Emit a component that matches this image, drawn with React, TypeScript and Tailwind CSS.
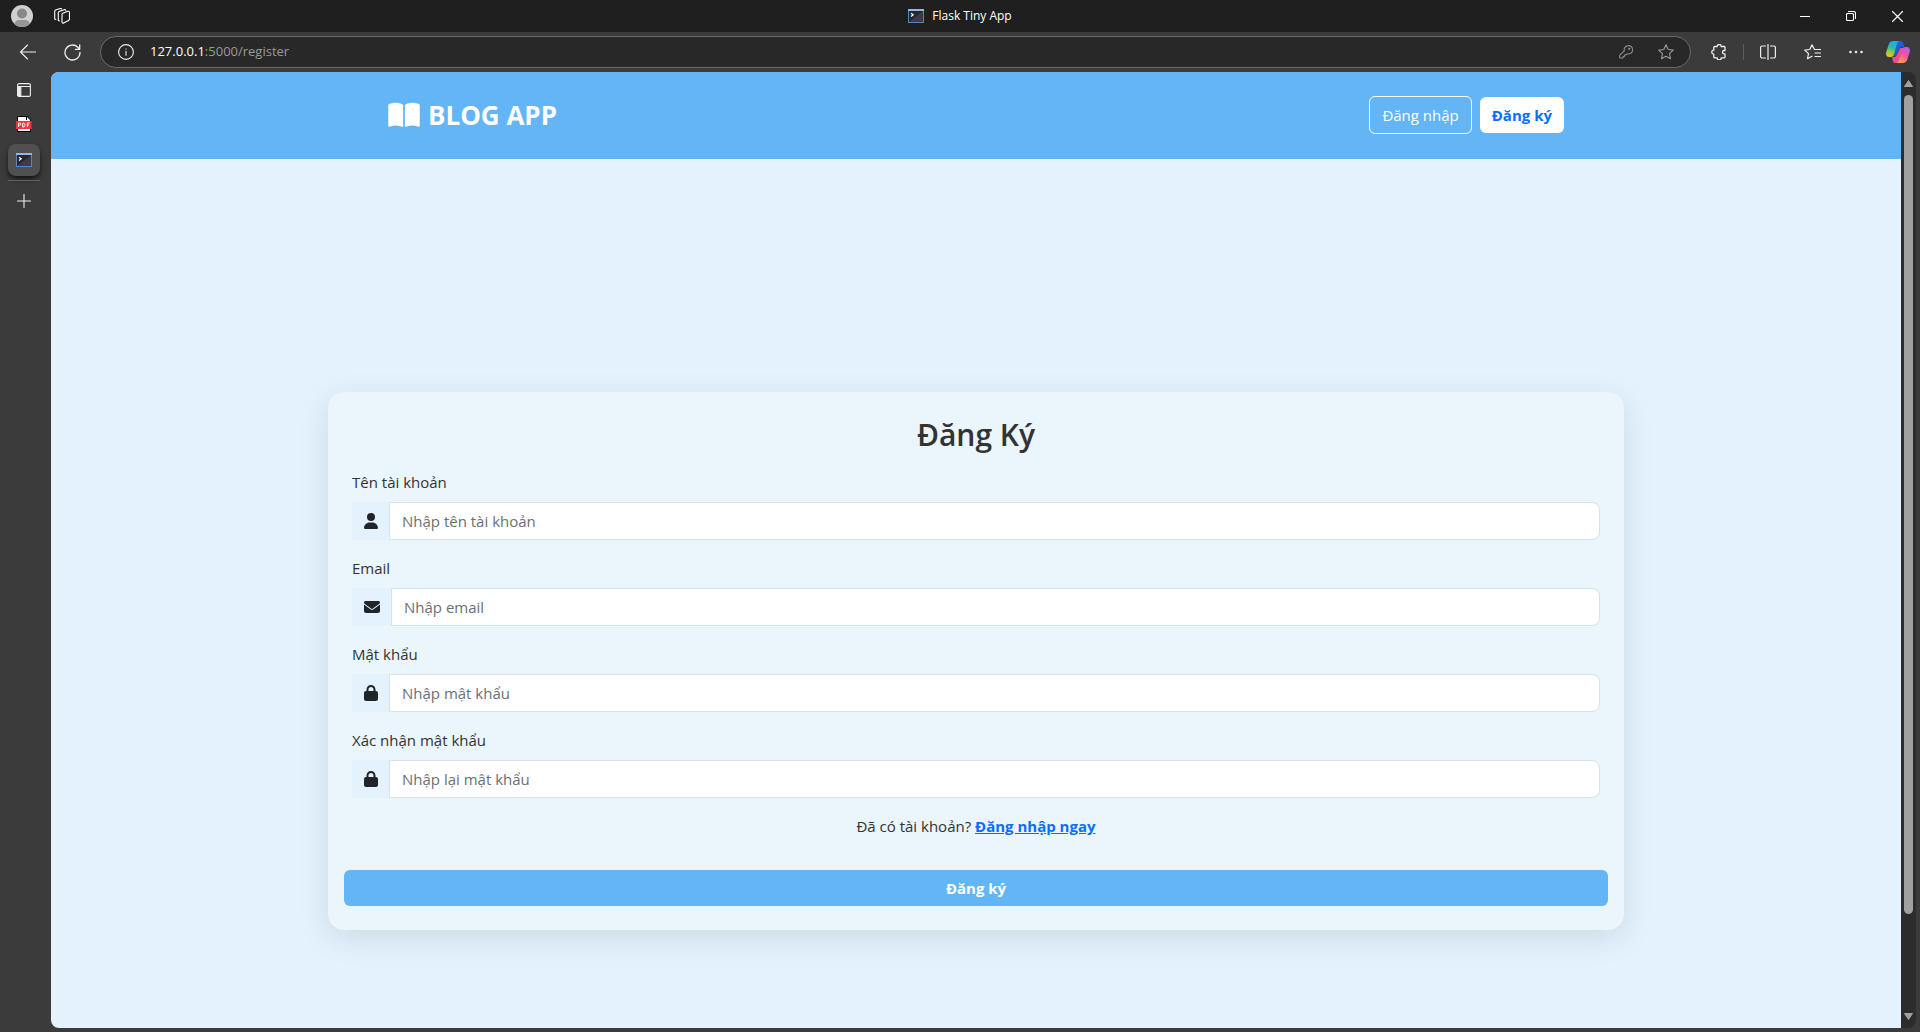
import type { ReactNode } from "react";
import { FaBookOpen, FaEnvelope, FaLock, FaUser } from "react-icons/fa6";

const line = {
  fill: "none",
  stroke: "currentColor",
  strokeWidth: 1.1,
  strokeLinecap: "round" as const,
  strokeLinejoin: "round" as const,
};

function TerminalIcon() {
  return (
    <svg width="16" height="16" viewBox="0 0 16 16" aria-hidden="true">
      <rect x="0" y="1" width="16" height="14" fill="#5b83c4" />
      <rect x="0" y="1" width="16" height="2" fill="#8fb9ee" />
      <rect x="11" y="1" width="3" height="1" fill="#d9a0b4" />
      <rect x="1" y="3" width="14" height="11" fill="#26282d" />
      <path d="M1 14L15 3v11z" fill="#3a3d42" />
      <path d="M3 5.2l2.2 1.6L3 8.4" fill="none" stroke="#fff" strokeWidth="1.2" />
    </svg>
  );
}

function PdfIcon() {
  return (
    <svg width="16" height="16" viewBox="0 0 16 16" aria-hidden="true">
      <path d="M1 0h10l4 4v12H1z" fill="#000" />
      <path d="M2 1h8v3h4v11H2z" fill="#fff" />
      <path d="M11 1l3 3h-3z" fill="#fff" />
      <rect x="0" y="5" width="15.5" height="8" rx="0.6" fill="#f5333f" />
      <path
        d="M2.5 11V7h1.2a1 1 0 0 1 0 2.2H2.5M6.7 7v4h.8c2 0 2-4 0-4zM11.3 11V7h2.2M11.3 9h1.8"
        fill="none"
        stroke="#fff"
        strokeWidth="1"
      />
    </svg>
  );
}

function CopilotIcon() {
  return (
    <svg width="24" height="22" viewBox="0 0 24 22" aria-hidden="true">
      <defs>
        <linearGradient id="cpA" x1="0.6" y1="0" x2="0.3" y2="1">
          <stop offset="0" stopColor="#1fa8f0" />
          <stop offset="0.4" stopColor="#2fb6b0" />
          <stop offset="0.7" stopColor="#8fce3c" />
          <stop offset="1" stopColor="#f2c513" />
        </linearGradient>
        <linearGradient id="cpB" x1="0.7" y1="0" x2="0.3" y2="1">
          <stop offset="0" stopColor="#b05cf5" />
          <stop offset="0.45" stopColor="#f0529c" />
          <stop offset="1" stopColor="#ffa04a" />
        </linearGradient>
        <linearGradient id="cpC" x1="0" y1="0" x2="1" y2="1">
          <stop offset="0" stopColor="#1d6fe8" />
          <stop offset="1" stopColor="#1b49c8" />
        </linearGradient>
      </defs>
      <path d="M8 0h6.5c1.6 0 2.4 1 2.9 2.6l1 3.4h-2.6c-1.7 0-2.5 1-3 2.500L10 15H7z" fill="url(#cpC)" />
      <path d="M16 22H9.500c-1.600 0-2.300-1-2.800-2.600L6 16h2c1.700 0 2.500-1 3-2.500L14 7h3z" fill="#e8508c" />
      <path
        d="M7.500 0h5.800c-1.500.3-2 1.600-2.500 3.200L8.400 12c-.7 2.600-1.500 4-3.600 4H3.200C.6 16-.4 13.800.3 11L2.500 4C3.300 1.400 4.700 0 7.500 0z"
        fill="url(#cpA)"
      />
      <path
        d="M16.500 22h-5.800c1.500-.3 2-1.600 2.500-3.200l2.400-8.800c.7-2.600 1.500-4 3.600-4h1.600c2.600 0 3.600 2.200 2.900 5l-2.200 7c-.8 2.600-2.200 4-5 4z"
        fill="url(#cpB)"
      />
    </svg>
  );
}

function ChromeButton({ label, children, className = "w-8" }: { label: string; children: ReactNode; className?: string }) {
  return (
    <button type="button" aria-label={label} className={`flex h-8 shrink-0 items-center justify-center ${className}`}>
      {children}
    </button>
  );
}

function TitleBar() {
  return (
    <div className="grid h-8 shrink-0 grid-cols-[1fr_auto_1fr] items-center bg-[#1f1f1f] text-white">
      <div className="flex items-center gap-2 pl-1.5">
        <ChromeButton label="Profile">
          <svg width="22" height="22" viewBox="0 0 22 22" aria-hidden="true">
            <clipPath id="avatar">
              <circle cx="11" cy="11" r="11" />
            </clipPath>
            <g clipPath="url(#avatar)">
              <rect width="22" height="22" fill="#d2d0ce" />
              <circle cx="11" cy="8.500" r="5" fill="#8a8886" />
              <path d="M3 22c0-5 2-7 5-7h6c3 0 5 2 5 7z" fill="#979593" />
            </g>
          </svg>
        </ChromeButton>
        <ChromeButton label="Workspaces">
          <svg width="16" height="16" viewBox="0 0 16 16" aria-hidden="true" {...line}>
            <path d="M8.800 5.200l5-1.900c.8-.3 1.700.2 1.700 1.100v6.700c0 .6-.3 1-.9 1.300l-5 2.600c-.8.400-1.600 0-1.600-.9V6.400c0-.6.300-1 .8-1.200z" />
            <path d="M5.400 12.900c-.7.100-1.100-.3-1.100-1V4.700c0-.6.300-1 .9-1.300l5-1.700c.7-.2 1.300 0 1.500.6" />
            <path d="M2 11.500c-.8.100-1.300-.3-1.300-1V3.400c0-.6.300-1 .9-1.300L6.200.6c.7-.2 1.200 0 1.500.4" />
          </svg>
        </ChromeButton>
      </div>
      <div className="flex items-center gap-2 text-xs">
        <TerminalIcon />
        <span>Flask Tiny App</span>
      </div>
      <div className="flex justify-end">
        <ChromeButton label="Minimize" className="w-[46px]">
          <svg width="10" height="10" viewBox="0 0 10 10" aria-hidden="true">
            <path d="M0 5.500h10" stroke="#fff" />
          </svg>
        </ChromeButton>
        <ChromeButton label="Restore" className="w-[46px]">
          <svg width="10" height="10" viewBox="0 0 10 10" aria-hidden="true" {...line}>
            <rect x="0.500" y="2.500" width="7" height="7" rx="1" />
            <path d="M2.500.5h5a2 2 0 0 1 2 2v5" />
          </svg>
        </ChromeButton>
        <ChromeButton label="Close" className="w-[46px]">
          <svg width="11" height="11" viewBox="0 0 11 11" aria-hidden="true" {...line}>
            <path d="M.5.5l10 10M10.500.5l-10 10" />
          </svg>
        </ChromeButton>
      </div>
    </div>
  );
}

const starPath =
  "M8 .8l2.200 4.700 5.100.6-3.800 3.500 1 5.100L8 12.200l-4.500 2.500 1-5.100L.7 6.100l5.100-.6z";

function Toolbar() {
  return (
    <div className="flex h-10 shrink-0 items-center bg-[#3b3b3b] pr-1.5 pl-3 text-[#ededed]">
      <ChromeButton label="Back">
        <svg width="16" height="16" viewBox="0 0 16 16" aria-hidden="true" {...line}>
          <path d="M16 8H.5M7.500 1L.5 8l7 7" />
        </svg>
      </ChromeButton>
      <ChromeButton label="Refresh" className="mx-3 w-8">
        <svg width="17" height="17" viewBox="0 0 17 17" aria-hidden="true" {...line} strokeWidth={1.3}>
          <path d="M16 8.500A7.500 7.500 0 1 1 13.600 3l2 2.200M15.700 1v4.300h-4.300" />
        </svg>
      </ChromeButton>
      <div className="flex h-8 min-w-0 flex-1 items-center rounded-full border border-[#6a6a6a] bg-[#282828] pr-2 pl-[17px]">
        <svg width="16" height="16" viewBox="0 0 16 16" aria-hidden="true" {...line}>
          <circle cx="8" cy="8" r="7.400" />
          <path d="M8 7.200v4M8 4.700v.2" />
        </svg>
        <span className="flex-1 pl-4 text-[13px] text-[#9a9a9a]">
          <span className="text-white">127.0.0.1</span>:5000/register
        </span>
        <ChromeButton label="Saved passwords" className="w-8 text-[#8c8c8c]">
          <svg width="14" height="14" viewBox="0 0 14 14" aria-hidden="true" {...line}>
            <path d="M9.200.6a4.200 4.200 0 1 1-1 8.200L6.800 10H5.400v1.500H4V13H1.200L.6 12.400v-2L5.300 5.900A4.200 4.200 0 0 1 9.200.6z" />
            <circle cx="10.200" cy="3.800" r="0.600" />
          </svg>
        </ChromeButton>
        <ChromeButton label="Add to favorites" className="ml-2 w-8 text-[#9a9a9a]">
          <svg width="16" height="16" viewBox="0 0 16 16" aria-hidden="true" {...line}>
            <path d={starPath} />
          </svg>
        </ChromeButton>
      </div>
      <ChromeButton label="Extensions" className="ml-3 w-8">
        <svg width="16" height="16" viewBox="0 0 16 16" aria-hidden="true" {...line} strokeWidth={1.3}>
          <path d="M3.800 2.500h2.400a2 2 0 0 1 4 0h2.800a1 1 0 0 1 1 1v3h-.8a1.700 1.700 0 0 0 0 3.400h.8v3a1 1 0 0 1-1 1h-2.800a2 2 0 0 1-4 0H3.800a1 1 0 0 1-1-1v-2.700a2 2 0 0 1 0-4V3.500a1 1 0 0 1 1-1z" />
        </svg>
      </ChromeButton>
      <span className="mx-2 h-4 w-px bg-[#5c5c5c]" />
      <ChromeButton label="Split screen">
        <svg width="16" height="16" viewBox="0 0 16 16" aria-hidden="true" {...line} strokeWidth={1.2}>
          <path d="M8 .5v15M5.500 2H2a1.400 1.400 0 0 0-1.400 1.400v9.200A1.400 1.400 0 0 0 2 14h3.500M10.500 2H14a1.400 1.400 0 0 1 1.400 1.400v9.200A1.400 1.400 0 0 1 14 14h-3.500" />
        </svg>
      </ChromeButton>
      <ChromeButton label="Favorites" className="mx-3 w-8">
        <svg width="17" height="16" viewBox="0 0 17 16" aria-hidden="true" {...line} strokeWidth={1.2}>
          <path d="M15 5.500h-4.500L8 .8 5.800 5.500.7 6.100l3.800 3.500-1 5.100L8 12.200M10.500 5.500h6M11 9h5.500M11 12.500h5.500" />
        </svg>
      </ChromeButton>
      <ChromeButton label="Settings and more">
        <svg width="14" height="4" viewBox="0 0 14 4" fill="currentColor" aria-hidden="true">
          <circle cx="1.500" cy="2" r="1.300" />
          <circle cx="7" cy="2" r="1.300" />
          <circle cx="12.500" cy="2" r="1.300" />
        </svg>
      </ChromeButton>
      <ChromeButton label="Copilot" className="ml-2.5 w-8">
        <CopilotIcon />
      </ChromeButton>
    </div>
  );
}

function TabRail() {
  return (
    <nav aria-label="Tabs" className="flex w-[51px] shrink-0 flex-col items-start pl-2 text-[#ededed]">
      <button type="button" aria-label="Tab actions" className="flex h-9 w-8 items-center justify-center">
        <svg width="14" height="14" viewBox="0 0 14 14" aria-hidden="true" {...line}>
          <rect x="0.600" y="0.600" width="12.800" height="12.800" rx="1.500" />
          <path d="M.6 3.500h12.800" />
          <path d="M.6 3.500h3.200v10H2L.6 12z" fill="currentColor" />
        </svg>
      </button>
      <button type="button" aria-label="PDF document" className="flex h-8 w-8 items-center justify-center">
        <PdfIcon />
      </button>
      <button
        type="button"
        aria-label="Flask Tiny App"
        className="my-1 flex h-8 w-8 items-center justify-center rounded-lg bg-[#505050] shadow-md shadow-black/60"
      >
        <TerminalIcon />
      </button>
      <span className="h-px w-8 bg-[#606060]" />
      <button type="button" aria-label="New tab" className="flex h-10 w-8 items-center justify-center">
        <svg width="14" height="14" viewBox="0 0 14 14" aria-hidden="true" {...line}>
          <path d="M7 .5v13M.5 7h13" />
        </svg>
      </button>
    </nav>
  );
}

type FieldProps = { id: string; label: string; type: string; placeholder: string; icon: ReactNode };

function Field({ id, label, type, placeholder, icon }: FieldProps) {
  return (
    <div className="mb-4">
      <label htmlFor={id} className="mb-2 block text-[15px] leading-6">
        {label}
      </label>
      <div className="flex h-[38px]">
        <span className="flex items-center bg-[#e3f2fd] px-3 text-base text-[#212529]">{icon}</span>
        <input
          id={id}
          type={type}
          placeholder={placeholder}
          className="-ml-px min-w-0 flex-1 rounded-r-lg border border-[#d5e3ea] bg-white px-3 text-[15px] leading-6 placeholder:text-[#6c6f72]"
        />
      </div>
    </div>
  );
}

const fields: FieldProps[] = [
  { id: "username", label: "Tên tài khoản", type: "text", placeholder: "Nhập tên tài khoản", icon: <FaUser className="h-4 w-3.5" /> },
  { id: "email", label: "Email", type: "email", placeholder: "Nhập email", icon: <FaEnvelope className="size-4" /> },
  { id: "password", label: "Mật khẩu", type: "password", placeholder: "Nhập mật khẩu", icon: <FaLock className="h-4 w-3.5" /> },
  { id: "confirm", label: "Xác nhận mật khẩu", type: "password", placeholder: "Nhập lại mật khẩu", icon: <FaLock className="h-4 w-3.5" /> },
];

function WebPage() {
  return (
    <div className="min-w-0 flex-1 overflow-hidden rounded-tl-lg rounded-bl-lg bg-[#e3f2fd] text-[#333]">
      <header className="bg-[#64b5f6] pt-6 pb-[25px]">
        <div className="mx-auto flex max-w-[1296px] items-center justify-between px-[60px]">
          <a href="#home" className="flex items-center gap-2 text-[26px] leading-8 font-bold text-white">
            <FaBookOpen className="h-7 w-8" />
            BLOG APP
          </a>
          <div className="flex items-center gap-2 text-[15px] leading-6">
            <button type="button" className="h-[38px] rounded-md border border-white px-3 text-white">
              Đăng nhập
            </button>
            <button type="button" className="h-9 rounded-md bg-white px-3 font-bold text-[#0d6efd]">
              Đăng ký
            </button>
          </div>
        </div>
      </header>
      <main className="box-content flex min-h-full items-center justify-center py-6">
        <form className="w-full max-w-[1296px] rounded-2xl bg-[#eaf5fc] p-6 shadow-[0_8px_32px_rgba(0,0,0,0.1)]">
          <h1 className="mb-4 text-center text-[30px] leading-[38px] font-semibold text-[#333]">Đăng Ký</h1>
          {fields.map((field) => (
            <Field key={field.id} {...field} />
          ))}
          <p className="mb-8 text-center text-[15px] leading-6">
            Đã có tài khoản?{" "}
            <a href="#login" className="font-bold text-[#0d6efd] underline">
              Đăng nhập ngay
            </a>
          </p>
          <div className="-mx-2">
            <button type="submit" className="h-9 w-full rounded-md bg-[#64b5f6] text-[15px] font-bold text-white">
              Đăng ký
            </button>
          </div>
        </form>
      </main>
    </div>
  );
}

function ScrollBar() {
  return (
    <div className="mr-1 flex w-[15px] shrink-0 flex-col items-center rounded-r-lg bg-[#2c2c2c] py-2">
      <svg width="9" height="7" viewBox="0 0 9 7" aria-hidden="true">
        <path d="M4.500.5L8.500 6.500H.5z" fill="#a0a0a0" stroke="#a0a0a0" strokeLinejoin="round" />
      </svg>
      <div className="my-2 flex w-[9px] flex-1 flex-col">
        <div className="h-[90%] rounded-full bg-[#a0a0a0]" />
      </div>
      <svg width="9" height="7" viewBox="0 0 9 7" aria-hidden="true">
        <path d="M4.500 6.500L8.500.5H.5z" fill="#a0a0a0" stroke="#a0a0a0" strokeLinejoin="round" />
      </svg>
    </div>
  );
}

export default function App() {
  return (
    <div className="flex h-screen flex-col bg-[#3b3b3b] font-['Open_Sans','Noto_Sans',sans-serif]">
      <TitleBar />
      <Toolbar />
      <div className="flex min-h-0 flex-1 pb-1">
        <TabRail />
        <WebPage />
        <ScrollBar />
      </div>
    </div>
  );
}
